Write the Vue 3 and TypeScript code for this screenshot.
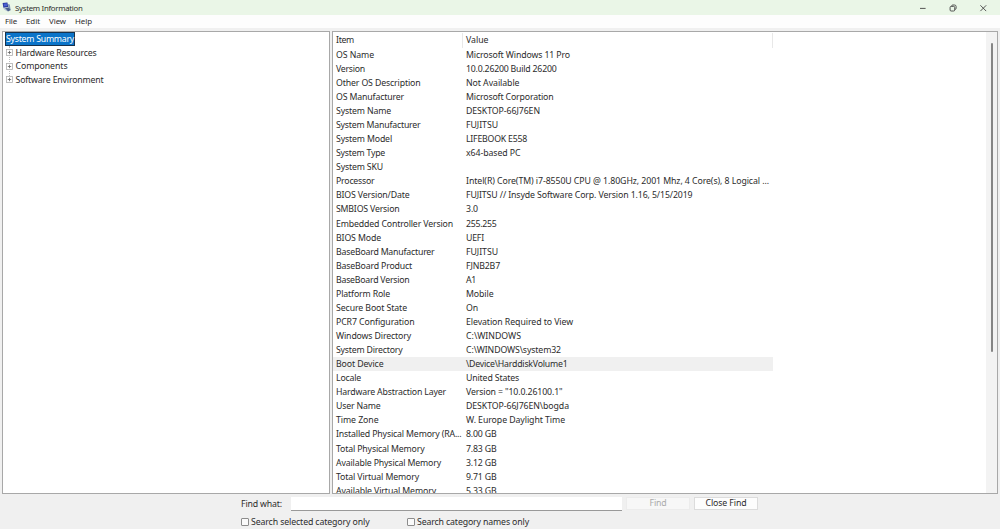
<script setup lang="ts">
import { ref, type Directive } from 'vue'

interface Row { item: string; itemWidth: number; value: string; valueWidth: number }

/** Spreads or tightens letters so that a label fills the given width. */
const vFit: Directive<HTMLElement, number> = {
  mounted(el, { value: width }) {
    const count = el.textContent?.length ?? 0
    if (!count || !width) return
    const natural = el.getBoundingClientRect().width
    el.style.letterSpacing = `${(width - natural) / count}px`
  },
}

const menu: [string, number][] = [['File', 12], ['Edit', 14], ['View', 17], ['Help', 17]]
const categories: [string, number][] = [['Hardware Resources', 81], ['Components', 52], ['Software Environment', 88]]
const selected = ref('Boot Device')
const query = ref('')

const row = (item: string, itemWidth: number, value: string, valueWidth: number): Row => ({ item, itemWidth, value, valueWidth })

const rows: Row[] = [
  row('OS Name', 38, 'Microsoft Windows 11 Pro', 104),
  row('Version', 29, '10.0.26200 Build 26200', 90.5),
  row('Other OS Description', 84.5, 'Not Available', 53.5),
  row('OS Manufacturer', 68, 'Microsoft Corporation', 87.5),
  row('System Name', 55, 'DESKTOP-66J76EN', 74),
  row('System Manufacturer', 84.5, 'FUJITSU', 32),
  row('System Model', 56, 'LIFEBOOK E558', 61),
  row('System Type', 49, 'x64-based PC', 54.5),
  row('System SKU', 47, '', 0),
  row('Processor', 38.5, 'Intel(R) Core(TM) i7-8550U CPU @ 1.80GHz, 2001 Mhz, 4 Core(s), 8 Logical ...', 303),
  row('BIOS Version/Date', 73.5, 'FUJITSU // Insyde Software Corp. Version 1.16, 5/15/2019', 226.5),
  row('SMBIOS Version', 63.5, '3.0', 12),
  row('Embedded Controller Version', 117, '255.255', 30.5),
  row('BIOS Mode', 45, 'UEFI', 18),
  row('BaseBoard Manufacturer', 98.5, 'FUJITSU', 32),
  row('BaseBoard Product', 76, 'FJNB2B7', 34),
  row('BaseBoard Version', 73.5, 'A1', 10),
  row('Platform Role', 54, 'Mobile', 27.5),
  row('Secure Boot State', 71, 'On', 12),
  row('PCR7 Configuration', 78.5, 'Elevation Required to View', 107),
  row('Windows Directory', 75, 'C:\\WINDOWS', 55),
  row('System Directory', 66.5, 'C:\\WINDOWS\\system32', 95),
  row('Boot Device', 47.5, '\\Device\\HarddiskVolume1', 101.5),
  row('Locale', 25, 'United States', 53),
  row('Hardware Abstraction Layer', 110, 'Version = "10.0.26100.1"', 96.5),
  row('User Name', 44.5, 'DESKTOP-66J76EN\\bogda', 103),
  row('Time Zone', 42.5, 'W. Europe Daylight Time', 99),
  row('Installed Physical Memory (RA...', 125.5, '8.00 GB', 30.5),
  row('Total Physical Memory', 88.5, '7.83 GB', 30.5),
  row('Available Physical Memory', 105, '3.12 GB', 30.5),
  row('Total Virtual Memory', 83, '9.71 GB', 30.5),
  row('Available Virtual Memory', 100, '5.33 GB', 30.5),
]
</script>

<template>
  <div class="window">
    <header class="titlebar">
      <svg class="app-icon" viewBox="0 0 10 10">
        <path d="M.6 1 5.4.4 6.2 5 1.4 5.8Z" fill="#26359c" />
        <path d="M1.5 1.7 4.8 1.3 5.2 3.9 2 4.5Z" fill="#4a5fd0" />
        <path d="M6 2 7.8 2.6 8.6 7.8 6.4 7Z" fill="#8298b8" />
        <path d="M2.4 6.2 6.3 5.5 8.9 8 6 9.4Z" fill="#4b5f8c" />
        <path d="M1 6.5 3.2 6.2 5.6 8.8 4.4 9Z" fill="#b4c1d3" />
      </svg>
      <span v-fit="67.5" class="title">System Information</span>
      <div class="controls">
        <svg viewBox="0 0 10 10"><path d="M2 5.4H7.6" /></svg>
        <svg viewBox="0 0 10 10"><rect x="2.1" y="3.4" width="4.6" height="4.6" rx="1" /><path d="M3.7 3.1V2.8Q3.8 2 4.7 2H6.5Q8.1 2 8.1 3.5V5.3Q8.1 6.3 7 6.5" /></svg>
        <svg viewBox="0 0 10 10"><path d="M2.4 2.3 8.2 8.1M8.2 2.3 2.4 8.1" /></svg>
      </div>
    </header>
    <nav class="menu"><span v-for="[name, width] in menu" :key="name" v-fit="width">{{ name }}</span></nav>

    <main class="panes">
      <section class="tree">
        <div class="root"><span v-fit="68">System Summary</span></div>
        <ul>
          <li v-for="[name, width] in categories" :key="name">
            <svg class="plus" viewBox="0 0 7 7"><rect x=".5" y=".5" width="6" height="6" /><path d="M1.8 3.5H5.2M3.5 1.8V5.2" /></svg>
            <span v-fit="width">{{ name }}</span>
          </li>
        </ul>
      </section>
      <section class="details">
        <div class="list">
          <div class="row head"><div><span v-fit="18">Item</span></div><div><span v-fit="22.5">Value</span></div></div>
          <div v-for="r in rows" :key="r.item" class="row" :class="{ active: r.item === selected }">
            <div><span v-fit="r.itemWidth">{{ r.item }}</span></div>
            <div><span v-fit="r.valueWidth">{{ r.value }}</span></div>
          </div>
        </div>
        <div class="scrollbar"><div class="thumb"></div></div>
      </section>
    </main>

    <footer class="find">
      <div class="line">
        <label class="what" for="query"><span v-fit="41">Find what:</span></label>
        <input id="query" v-model="query" class="query" />
        <button class="btn" disabled><span v-fit="17">Find</span></button>
        <button class="btn close"><span v-fit="41">Close Find</span></button>
      </div>
      <div class="options">
        <label><i class="box"></i><span v-fit="118.5">Search selected category only</span></label>
        <label><i class="box"></i><span v-fit="112">Search category names only</span></label>
      </div>
    </footer>
  </div>
</template>

<style>
html, body { margin: 0; overflow: hidden; }
</style>

<style scoped>
.window { width: 1000px; height: 529px; display: flex; flex-direction: column; overflow: hidden; background: #f0f0f0; color: #2c2c2c; font: 8.75px/14px "Noto Sans", "Open Sans", sans-serif; box-sizing: border-box; }
span { display: inline-block; white-space: pre; }
.titlebar { height: 15px; flex: none; display: flex; align-items: center; background: #eaf6e7; padding-left: 2px; }
.app-icon { width: 10px; height: 10px; margin: -1px 3px 0 0; }
.title { font-size: 7.8px; }
.controls { margin-left: auto; display: flex; gap: 20px; padding-right: 12px; }
.controls svg { width: 10px; height: 10px; fill: none; stroke: #444; stroke-width: .9; }
.menu { height: 13px; flex: none; display: flex; gap: 9px; padding-left: 5px; background: #fdfdfd; font-size: 7.9px; line-height: 13px; }
.panes { height: 461px; flex: none; margin-top: 3px; display: flex; gap: 2px; padding: 0 2px; }
.tree, .details { box-sizing: border-box; height: 463px; border: 1px solid #a8a8a8; background: #fff; }
.tree { width: 328px; padding: 0 0 0 2px; }
.root { display: block; box-sizing: border-box; width: 70px; height: 14px; border: 1px solid #17324d; background: #0b74c9; color: #fff; line-height: 12px; white-space: nowrap; }
.tree ul { position: relative; list-style: none; margin: 0; padding: 0 0 0 1px; }
.tree ul::before { content: ""; position: absolute; left: 4px; top: 0; height: 34px; border-left: 1px dotted #bbb; }
.tree li { position: relative; display: flex; align-items: center; gap: 3px; height: 13.5px; }
.plus { width: 7px; height: 7px; fill: #fff; stroke: #b0b0b0; stroke-width: .8; }
.plus path { stroke: #666; }
.tree li span { margin-left: -.5px; }
.details { flex: 1; display: flex; justify-content: space-between; overflow: hidden; }
.list { width: 440px; padding-top: 1px; }
.row { display: grid; grid-template-columns: 130px 310px; height: 14.07px; line-height: 14px; }
.row > div { padding-left: 3px; }
.head { height: 14.8px; }
.head > div { border-right: 1px solid #e8e8e8; }
.active { background: #f0f0f0; }
.scrollbar { width: 11px; background: #f3f3f3; padding-top: 11px; box-sizing: border-box; }
.thumb { width: 2px; height: 309px; margin-left: 5px; background: #858585; border-radius: 1px; }
.find { padding: 5px 0 0 241px; }
.line { display: flex; height: 15px; }
.what { width: 50px; line-height: 14px; }
.query { width: 331px; height: 14px; box-sizing: border-box; border: 0; border-bottom: 1px solid #999; background: #fff; outline: 0; padding: 0 3px; font: inherit; }
.btn { box-sizing: border-box; width: 64px; height: 13px; margin-left: 4px; padding: 0; border: 1px solid #ececec; background: #f7f7f7; color: #aaa; font: inherit; line-height: 11px; }
.close { border-color: #dcdcdc; background: #fdfdfd; color: #2c2c2c; }
.options { display: flex; margin-top: 4px; line-height: 12px; }
.options label { display: flex; width: 166px; align-items: center; gap: 2px; white-space: nowrap; }
.box { box-sizing: border-box; width: 8px; height: 8px; border: 1px solid #8c8c8c; border-radius: 1px; background: #fafafa; }
</style>
